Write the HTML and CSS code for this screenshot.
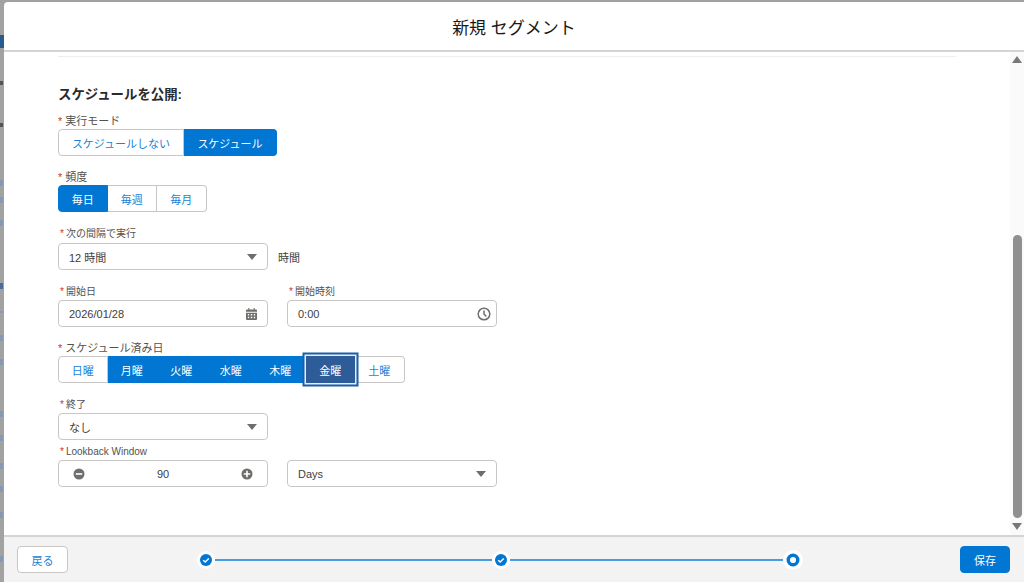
FILE: index.html
```html
<!DOCTYPE html>
<html lang="ja">
<head>
    <meta charset="UTF-8">
    <title>新規 セグメント</title>
    <link rel="stylesheet" href="styles.css">
</head>
<body>
    <div class="backdrop">
        <span class="peek blue"></span>
        <span class="peek dark p2"></span>
        <span class="peek dark p3"></span>
        <span class="peek p4"></span>
        <span class="peek p5"></span>
        <span class="peek p6"></span>
        <span class="peek deep p7"></span>
        <span class="peek p8"></span>
        <span class="peek p9"></span>
        <span class="peek p10"></span>
        <span class="peek p11"></span>
        <span class="peek p12"></span>
        <span class="peek p13"></span>
        <span class="peek p14"></span>
        <span class="peek p15"></span>
        <span class="peek p16"></span>
    </div>

    <div class="modal">
        <header class="modal-head">新規 セグメント</header>

        <div class="modal-body">
            <div class="content">
                <div class="top-rule"></div>
                <h2 class="section-title">スケジュールを公開:</h2>

                <div class="label label-dark label-mode"><span class="req">*</span>実行モード</div>
                <div class="btn-group">
                    <button class="seg w126">スケジュールしない</button>
                    <button class="seg on w93">スケジュール</button>
                </div>

                <div class="label label-dark label-gap"><span class="req">*</span>頻度</div>
                <div class="btn-group">
                    <button class="seg on day">毎日</button>
                    <button class="seg day">毎週</button>
                    <button class="seg day">毎月</button>
                </div>

                <div class="label label-small label-gap label-field"><span class="req">*</span>次の間隔で実行</div>
                <div class="row">
                    <div class="field">12 時間<span class="caret"></span></div>
                    <span class="unit">時間</span>
                </div>

                <div class="row row-dates">
                    <div>
                        <div class="label label-small label-date"><span class="req">*</span>開始日</div>
                        <div class="field">2026/01/28
                            <svg class="cal" width="11" height="12" viewBox="0 0 12 13"><path fill="#706e6b" d="M2.500 0h1.200v1.500h4.600V0h1.200v1.500H11c.6 0 1 .4 1 1V4H0V2.500c0-.6.4-1 1-1h1.500zM0 5h12v7c0 .6-.4 1-1 1H1c-.6 0-1-.4-1-1zm2 1.500V8h1.500V6.500zm3.200 0V8h1.600V6.500zm3.300 0V8H10V6.500zM2 9.500V11h1.500V9.500zm3.200 0V11h1.600V9.500zm3.300 0V11H10V9.500z"/></svg>
                        </div>
                    </div>
                    <div>
                        <div class="label label-small label-date"><span class="req">*</span>開始時刻</div>
                        <div class="field">0:00
                            <svg class="clock" width="14" height="14" viewBox="0 0 14 14"><circle cx="7" cy="7" r="5.800" fill="none" stroke="#706e6b" stroke-width="1.500"/><path d="M7 3.500V7l2.300 2.500" fill="none" stroke="#706e6b" stroke-width="1.500"/></svg>
                        </div>
                    </div>
                </div>

                <div class="label label-dark label-gap"><span class="req">*</span>スケジュール済み日</div>
                <div class="btn-group">
                    <button class="seg day">日曜</button>
                    <button class="seg on day">月曜</button>
                    <button class="seg on day">火曜</button>
                    <button class="seg on day">水曜</button>
                    <button class="seg on day">木曜</button>
                    <button class="seg focus day">金曜</button>
                    <button class="seg day">土曜</button>
                </div>

                <div class="label label-small label-gap label-date"><span class="req">*</span>終了</div>
                <div class="field">なし<span class="caret"></span></div>

                <div class="label label-small label-look"><span class="req">*</span>Lookback Window</div>
                <div class="row">
                    <div class="field stepper">
                        <svg width="12" height="12" viewBox="0 0 12 12"><circle cx="6" cy="6" r="5.500" fill="#706e6b"/><rect x="2.800" y="5.200" width="6.400" height="1.600" fill="#fff"/></svg>
                        <span>90</span>
                        <svg width="12" height="12" viewBox="0 0 12 12"><circle cx="6" cy="6" r="5.500" fill="#706e6b"/><path d="M2.800 5.200h2.400V2.800h1.600v2.400h2.400v1.600H6.800v2.400H5.200V6.800H2.800z" fill="#fff"/></svg>
                    </div>
                    <div class="field">Days<span class="caret"></span></div>
                </div>
            </div>

            <div class="scrollbar">
                <span class="arrow up"></span>
                <div class="track"><div class="thumb"></div></div>
                <span class="arrow down"></span>
            </div>
        </div>

        <footer class="modal-foot">
            <button class="back">戻る</button>
            <div class="path">
                <span class="step">
                    <svg width="12" height="12" viewBox="0 0 12 12"><circle cx="6" cy="6" r="6" fill="#0176d3"/><path d="M3.200 6.200l2 1.800 3.600-3.500" fill="none" stroke="#fff" stroke-width="1.500"/></svg>
                </span>
                <span class="line line-a"></span>
                <span class="step">
                    <svg width="12" height="12" viewBox="0 0 12 12"><circle cx="6" cy="6" r="6" fill="#0176d3"/><path d="M3.200 6.200l2 1.800 3.600-3.500" fill="none" stroke="#fff" stroke-width="1.500"/></svg>
                </span>
                <span class="line line-b"></span>
                <span class="step step-now">
                    <svg width="14" height="14" viewBox="0 0 14 14"><circle cx="7" cy="7" r="4.800" fill="#fff" stroke="#0176d3" stroke-width="3.400"/></svg>
                </span>
            </div>
            <button class="save">保存</button>
        </footer>
    </div>
</body>
</html>
```

FILE: styles.css
```css
html, body {
    margin: 0;
    height: 100%;
    overflow: hidden;
}
body {
    display: flex;
    background: #a2a2a2;
    font-family: "Liberation Sans", "Noto Sans CJK JP", sans-serif;
    color: #3e3e3c;
}
button {
    font-family: inherit;
    padding: 0;
    cursor: pointer;
}

/* page behind the modal */
.backdrop {
    width: 4px;
    flex: none;
    position: relative;
}
.peek {
    position: absolute;
    left: 0;
    width: 3px;
    height: 6px;
    background: #8698b2;
}
.blue { top: 35px; width: 4px; height: 13px; background: #2a5a8e; }
.dark { background: #555; height: 4px; }
.deep { background: #4a6c9c; }
.p2 { top: 81px; }
.p3 { top: 123px; }
.p4 { top: 180px; }
.p5 { top: 197px; }
.p6 { top: 220px; }
.p7 { top: 283px; }
.p8 { top: 311px; height: 2px; }
.p9 { top: 335px; }
.p10 { top: 359px; }
.p11 { top: 411px; }
.p12 { top: 435px; }
.p13 { top: 463px; }
.p14 { top: 486px; }
.p15 { top: 512px; }
.p16 { top: 556px; }

.modal {
    flex: 1;
    margin-top: 2px;
    min-width: 0;
    display: flex;
    flex-direction: column;
    background: #fff;
    border-radius: 4px 0 0 0;
}
.modal-head {
    height: 48px;
    flex: none;
    display: flex;
    align-items: center;
    justify-content: center;
    font-size: 17px;
    color: #181818;
    border-bottom: 2px solid #d4d4d4;
}

.modal-body {
    flex: 1;
    min-height: 0;
    display: flex;
}
.content {
    flex: 1;
    padding: 0 54px;
    min-width: 0;
}
.top-rule {
    height: 1px;
    margin-top: 4px;
    background: #eeeeee;
}
.section-title {
    margin: 28px 0 0;
    font-size: 13.400px;
    line-height: 20px;
    font-weight: bold;
    color: #2b2b2b;
}

.label {
    color: #54514f;
    white-space: nowrap;
    line-height: 16px;
}
.label-dark {
    font-size: 11px;
}
.label-dark .req {
    margin-right: 3px;
}
.label-small {
    font-size: 10px;
    line-height: 14px;
    padding: 2px 0 0 2px;
}
.req {
    color: #c23934;
    margin-right: 2px;
}
.label-mode { margin-top: 8px; }
.label-gap { margin-top: 13px; }
.label-field { margin-bottom: 2px; }
.label-date { margin-bottom: 1px; }
.label-look { margin-top: 3px; margin-bottom: 1px; }

.btn-group {
    display: flex;
    height: 27px;
}
.seg {
    height: 27px;
    box-sizing: border-box;
    font-size: 11px;
    background: #fff;
    color: #1b7fd6;
    border: 1px solid #c9c7c5;
    border-left: 0;
}
.seg:first-child {
    border-left: 1px solid #c9c7c5;
    border-radius: 4px 0 0 4px;
}
.seg:last-child {
    border-radius: 0 4px 4px 0;
}
.seg.on {
    background: #0176d3;
    border-color: #0176d3;
    color: #fff;
}
.seg.focus {
    background: #2e5c99;
    color: #fff;
    border: 0;
    box-shadow: 0 0 0 1.500px #e4eef8, 0 0 0 3.500px #1b5fa8;
    position: relative;
}
.w126 { width: 126px; }
.w93 { width: 93px; }
.day { width: 49.500px; }

.row {
    display: flex;
    align-items: center;
    gap: 19px;
}
.row-dates { margin-top: 13px; }

.field {
    width: 210px;
    height: 27px;
    box-sizing: border-box;
    padding: 0 10px;
    display: flex;
    align-items: center;
    justify-content: space-between;
    font-size: 11px;
    color: #3e3e3c;
    background: #fff;
    border: 1px solid #c9c7c5;
    border-radius: 4px;
}
.caret {
    width: 0;
    height: 0;
    border-left: 5px solid transparent;
    border-right: 5px solid transparent;
    border-top: 6px solid #706e6b;
}
.clock { margin-right: -5px; }
.unit {
    font-size: 11px;
    margin-left: -9px;
}
.stepper {
    padding: 0 14px;
}

.scrollbar {
    width: 14px;
    flex: none;
    display: flex;
    flex-direction: column;
    align-items: center;
    background: #fafafa;
}
.track {
    flex: 1;
    width: 100%;
    display: flex;
    flex-direction: column;
    justify-content: flex-end;
}
.thumb {
    width: 9px;
    height: 283px;
    margin: 0 auto 1px;
    border-radius: 4.500px;
    background: #8f8f8f;
}
.arrow {
    width: 0;
    height: 0;
    border-left: 5px solid transparent;
    border-right: 5px solid transparent;
    margin: 4px 0 5px;
}
.arrow.up { border-bottom: 7px solid #787878; }
.arrow.down { border-top: 7px solid #787878; }

.modal-foot {
    height: 45px;
    flex: none;
    display: flex;
    align-items: center;
    padding: 0 14px 0 13px;
    background: #f3f3f3;
    border-top: 2px solid #d4d4d4;
}
.back, .save {
    height: 27px;
    font-size: 11px;
    border-radius: 4px;
    flex: none;
}
.back {
    width: 51px;
    background: #fff;
    color: #1b7fd6;
    border: 1px solid #c9c7c5;
}
.save {
    width: 50px;
    background: #0176d3;
    color: #fff;
    border: 1px solid #0176d3;
}
.path {
    flex: 1;
    display: flex;
    align-items: center;
    margin-left: 129px;
}
.step {
    width: 18px;
    height: 18px;
    flex: none;
    display: flex;
    align-items: center;
    justify-content: center;
    background: #fff;
    border-radius: 50%;
}
.step-now {
    width: 20px;
    height: 20px;
}
.line {
    height: 2px;
    flex: none;
    background: #4a9be0;
}
.line-a { width: 277px; }
.line-b { width: 273px; }
```
